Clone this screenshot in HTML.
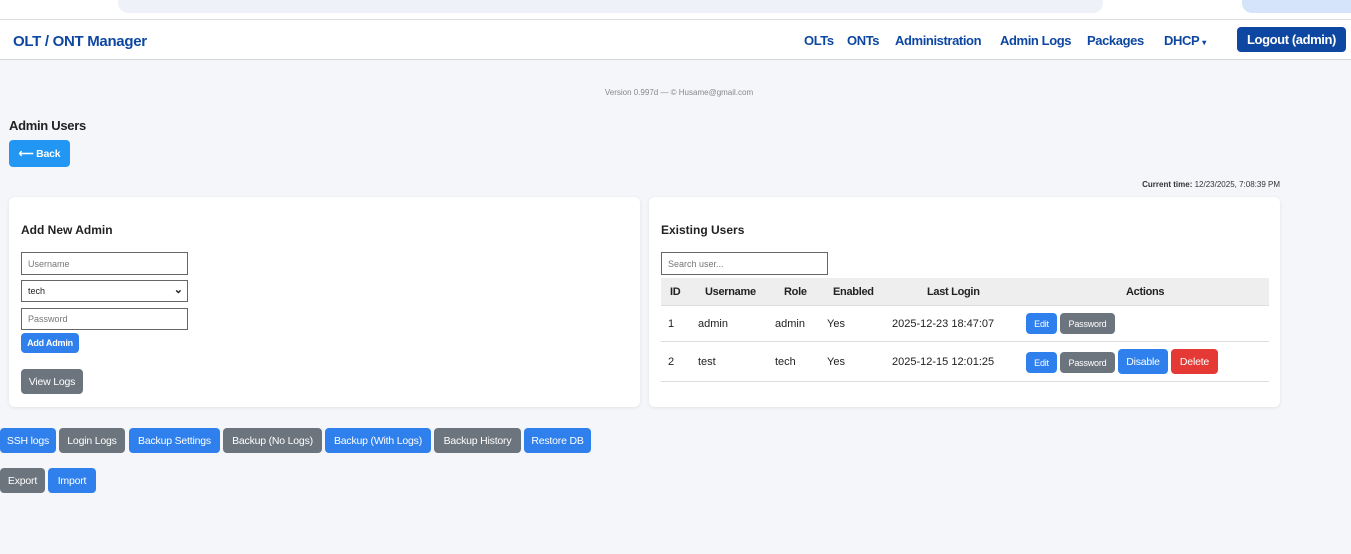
<!DOCTYPE html>
<html><head><meta charset="utf-8"><style>
*{box-sizing:border-box;margin:0;padding:0}
body{width:1351px;height:554px;background:#f5f6fa;font-family:"Liberation Sans",sans-serif;position:relative;overflow:hidden;color:#222}
.abs{position:absolute}
.chrome{left:0;top:0;width:1351px;height:19px;background:#fff}
.nav{left:0;top:19px;width:1351px;height:41px;background:#fff;border-top:1px solid #ddd;border-bottom:1px solid #d6d6d6}
.brand{left:13px;top:33px;font-weight:bold;font-size:15px;color:#0d47a1;letter-spacing:-0.3px}
.nl{top:33px;font-weight:bold;font-size:13px;color:#0d47a1;letter-spacing:-0.4px}
.btn{position:absolute;color:#fff;border-radius:4px;font-size:10.5px;display:flex;align-items:center;justify-content:center;white-space:nowrap;letter-spacing:-0.2px}
.b{background:#2f80ed}.g{background:#6c757d}.r{background:#e53935}
.card{background:#fff;border-radius:6px;box-shadow:0 1px 4px rgba(0,0,0,.08)}
.inp{position:absolute;border:1px solid #666;background:#fff;font-size:9px;color:#777;padding-left:6px;display:flex;align-items:center}
.t{position:absolute;font-size:11px;color:#222}
.th{position:absolute;font-size:11px;font-weight:bold;color:#222;letter-spacing:-0.3px}
</style></head><body>
<div class="abs chrome"><div class="abs" style="left:118px;top:0;width:985px;height:13px;background:#eef1f7;border-radius:0 0 10px 10px"></div><div class="abs" style="left:1242px;top:0;width:109px;height:13px;background:#d6e4fb;border-radius:0 0 0 10px"></div></div>
<div class="abs nav"></div>
<div class="abs brand">OLT / ONT Manager</div>
<div class="abs nl" style="left:804px">OLTs</div>
<div class="abs nl" style="left:847px">ONTs</div>
<div class="abs nl" style="left:895px">Administration</div>
<div class="abs nl" style="left:1000px">Admin Logs</div>
<div class="abs nl" style="left:1087px">Packages</div>
<div class="abs nl" style="left:1164px">DHCP <span style="font-size:8px">▾</span></div>
<div class="btn" style="left:1237px;top:27px;width:109px;height:25px;background:#0d47a1;font-weight:bold;font-size:13px;letter-spacing:-0.4px">Logout (admin)</div>
<div class="abs" style="left:0;width:1358px;top:88px;text-align:center;font-size:8px;color:#888">Version 0.997d — © Husame@gmail.com</div>
<div class="abs" style="left:9px;top:118px;font-size:13px;font-weight:bold;letter-spacing:-0.3px">Admin Users</div>
<div class="btn" style="left:9px;top:140px;width:61px;height:27px;background:#2196f3;font-weight:bold;font-size:10.5px">⟵ Back</div>
<div class="abs" style="right:71px;top:180px;font-size:8px;color:#333"><b>Current time:</b> 12/23/2025, 7:08:39 PM</div>

<div class="abs card" style="left:9px;top:197px;width:631px;height:210px"></div>
<div class="abs" style="left:21px;top:223px;font-size:12px;font-weight:bold">Add New Admin</div>
<div class="inp" style="left:21px;top:252px;width:167px;height:23px">Username</div>
<div class="inp" style="left:21px;top:280px;width:167px;height:22px;color:#222;font-size:9px">tech<span style="position:absolute;right:4px;top:2px;font-size:11px;font-weight:bold">⌄</span></div>
<div class="inp" style="left:21px;top:308px;width:167px;height:22px">Password</div>
<div class="btn b" style="left:21px;top:333px;width:58px;height:20px;font-size:9px;font-weight:bold">Add Admin</div>
<div class="btn g" style="left:21px;top:369px;width:62px;height:25px">View Logs</div>

<div class="abs card" style="left:649px;top:197px;width:631px;height:210px"></div>
<div class="abs" style="left:661px;top:223px;font-size:12px;font-weight:bold">Existing Users</div>
<div class="inp" style="left:661px;top:252px;width:167px;height:23px">Search user...</div>
<div class="abs" style="left:661px;top:278px;width:608px;height:28px;background:#eee;border-bottom:1px solid #ddd"></div>
<div class="th" style="left:670px;top:286px">ID</div>
<div class="th" style="left:705px;top:286px">Username</div>
<div class="th" style="left:784px;top:286px">Role</div>
<div class="th" style="left:833px;top:286px">Enabled</div>
<div class="th" style="left:927px;top:286px">Last Login</div>
<div class="th" style="left:1126px;top:286px">Actions</div>
<div class="abs" style="left:661px;top:341px;width:608px;height:1px;background:#ddd"></div>
<div class="abs" style="left:661px;top:381px;width:608px;height:1px;background:#ddd"></div>
<div class="t" style="left:668px;top:318px">1</div><div class="t" style="left:698px;top:318px">admin</div><div class="t" style="left:775px;top:318px">admin</div><div class="t" style="left:827px;top:318px">Yes</div><div class="t" style="left:892px;top:318px">2025-12-23 18:47:07</div>
<div class="btn b" style="left:1026px;top:313px;width:31px;height:21px;font-size:9px">Edit</div>
<div class="btn g" style="left:1060px;top:313px;width:55px;height:21px;font-size:9px">Password</div>
<div class="t" style="left:668px;top:356px">2</div><div class="t" style="left:698px;top:356px">test</div><div class="t" style="left:775px;top:356px">tech</div><div class="t" style="left:827px;top:356px">Yes</div><div class="t" style="left:892px;top:356px">2025-12-15 12:01:25</div>
<div class="btn b" style="left:1026px;top:352px;width:31px;height:21px;font-size:9px">Edit</div>
<div class="btn g" style="left:1060px;top:352px;width:55px;height:21px;font-size:9px">Password</div>
<div class="btn b" style="left:1118px;top:349px;width:50px;height:25px">Disable</div>
<div class="btn r" style="left:1171px;top:349px;width:47px;height:25px">Delete</div>

<div class="btn b" style="left:0;top:428px;width:56px;height:25px">SSH logs</div>
<div class="btn g" style="left:59px;top:428px;width:66px;height:25px">Login Logs</div>
<div class="btn b" style="left:129px;top:428px;width:91px;height:25px">Backup Settings</div>
<div class="btn g" style="left:223px;top:428px;width:99px;height:25px">Backup (No Logs)</div>
<div class="btn b" style="left:325px;top:428px;width:106px;height:25px">Backup (With Logs)</div>
<div class="btn g" style="left:434px;top:428px;width:87px;height:25px">Backup History</div>
<div class="btn b" style="left:524px;top:428px;width:67px;height:25px">Restore DB</div>
<div class="btn g" style="left:0;top:468px;width:45px;height:25px">Export</div>
<div class="btn b" style="left:48px;top:468px;width:48px;height:25px">Import</div>
</body></html>
